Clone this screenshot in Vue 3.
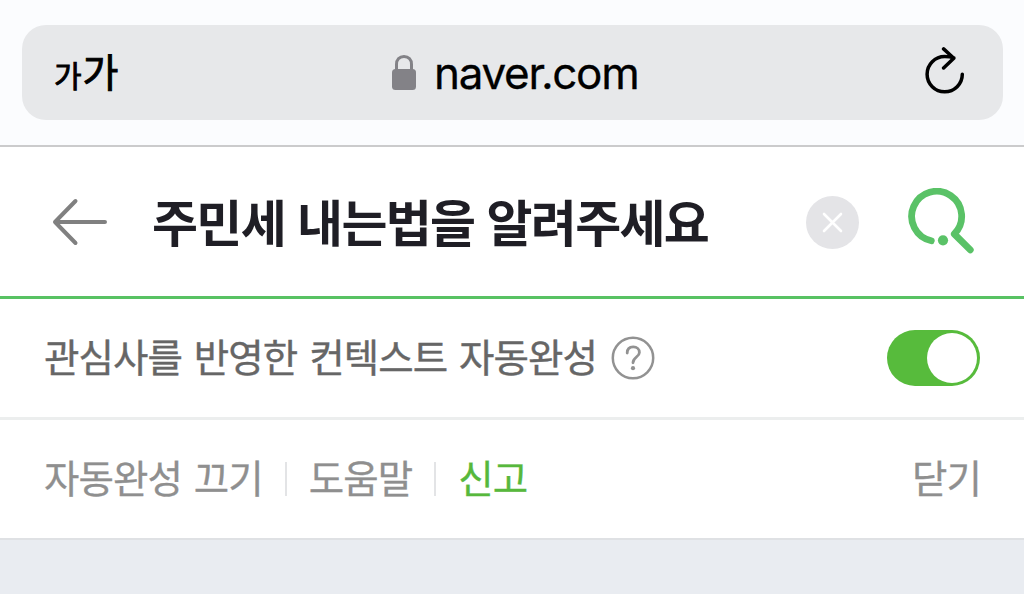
<template>
  <div class="page">
    <header class="browser-bar">
      <div class="address-bar">
        <button class="text-size"><span class="small">가</span><span class="large">가</span></button>
        <div class="site">
          <svg class="lock" viewBox="0 0 24 35" width="24" height="35">
            <path d="M4.5 15V9.5C4.5 4.5 7.5 1.5 12 1.5S19.5 4.5 19.5 9.5V15" fill="none" stroke="#838287" stroke-width="3"/>
            <rect y="14" width="24" height="21" rx="3.5" fill="#838287"/>
          </svg>
          <span class="domain">naver.com</span>
        </div>
        <svg class="reload" viewBox="0 0 40 48" width="40" height="48">
          <path d="M37.3 27.2A17.6 17.6 0 1 1 19.7 9.6C23 9.6 26 9.9 28.8 11M18.6 1.9L28.8 11.2L18.6 21" fill="none" stroke="#000" stroke-width="3.5" stroke-linecap="round" stroke-linejoin="round"/>
        </svg>
      </div>
    </header>

    <div class="search">
      <svg class="back" viewBox="0 0 56 48" width="56" height="48">
        <path d="M23.5 3L3 24L23.5 45M3 24H53" fill="none" stroke="#808080" stroke-width="4" stroke-linecap="round" stroke-linejoin="round"/>
      </svg>
      <span class="query">{{ query }}</span>
      <svg class="clear" viewBox="0 0 53 53" width="53" height="53" @click="query = ''">
        <circle cx="26.5" cy="26.5" r="26.5" fill="#e4e4e7"/>
        <path d="M18 18L35 35M35 18L18 35" stroke="#fff" stroke-width="2.6" stroke-linecap="round"/>
      </svg>
      <svg class="find" viewBox="0 0 68 68" width="68" height="68">
        <path d="M23.3 52.7A25 25 0 1 1 46.3 46L62.3 61.8" fill="none" stroke="#5ac267" stroke-width="6.8" stroke-linecap="round" stroke-linejoin="round"/>
        <circle cx="35" cy="52.3" r="5.1" fill="#5ac267"/>
      </svg>
    </div>

    <div class="context">
      <span class="context-label">관심사를 반영한 컨텍스트 자동완성</span>
      <svg class="help" viewBox="0 0 44 44" width="44" height="44">
        <circle cx="22" cy="22" r="20.2" fill="none" stroke="#929292" stroke-width="2.5"/>
        <path d="M16.2 17C16.2 13 18.5 10.9 22.2 10.9C26 10.9 28.4 13.2 28.4 16.4C28.4 21 22 21.2 22 26.8" fill="none" stroke="#929292" stroke-width="2.8" stroke-linecap="round"/>
        <circle cx="22" cy="32.2" r="2.1" fill="#929292"/>
      </svg>
      <button class="toggle" :class="{ on: enabled }" @click="enabled = !enabled"><span class="knob"></span></button>
    </div>

    <footer class="links">
      <template v-for="(link, index) in links" :key="link.name">
        <span v-if="index > 0" class="divider"></span>
        <span class="link" :class="{ report: link.report }">{{ link.name }}</span>
      </template>
      <span class="link close">닫기</span>
    </footer>
  </div>
</template>

<script setup>
import { ref } from 'vue'

const query = ref('주민세 내는법을 알려주세요')
const enabled = ref(true)

const links = [
  { name: '자동완성 끄기' },
  { name: '도움말' },
  { name: '신고', report: true }
]
</script>

<style>
body {
  margin: 0;
}
</style>

<style scoped>
.page {
  width: 100%;
  height: 594px;
  overflow: hidden;
  background-color: #e9ecf1;
  font-family: "Noto Sans CJK KR", sans-serif;
  white-space: nowrap;
}

.page > * {
  box-sizing: border-box;
  display: flex;
  align-items: center;
  background-color: #fff;
}

button {
  border: 0;
  padding: 0;
  background: none;
  font-family: inherit;
  cursor: pointer;
}

svg {
  flex-shrink: 0;
}

.browser-bar {
  height: 147px;
  padding: 0 21px 1px 22px;
  background-color: #fbfcfe;
  border-bottom: 2px solid #cbcbcc;
}

.address-bar {
  box-sizing: border-box;
  width: 100%;
  height: 95px;
  padding: 0 38px 0 32px;
  border-radius: 24px;
  background-color: #e7e8ea;
  display: flex;
  align-items: center;
}

.text-size {
  width: 70px;
  display: flex;
  align-items: baseline;
  line-height: 50px;
  color: #000;
  -webkit-text-stroke: 0.9px #000;
}

.small {
  font-size: 30px;
  margin-right: 1px;
}

.large {
  font-size: 39px;
}

.site {
  margin-left: 268px;
  display: flex;
  align-items: center;
  gap: 18px;
}

.domain {
  padding-top: 1px;
  font-family: Inter, sans-serif;
  font-size: 44px;
  letter-spacing: -1.3px;
  line-height: 50px;
  -webkit-text-stroke: 0.3px #000;
}

.reload {
  margin-left: auto;
  margin-bottom: 3px;
}

.search {
  height: 152px;
  padding: 1px 48px 0 52px;
  border-bottom: 3px solid #58c263;
}

.query {
  margin-left: 44px;
  padding-bottom: 4px;
  font-size: 50px;
  font-weight: 700;
  letter-spacing: -1.65px;
  word-spacing: 2.3px;
  line-height: 70px;
  color: #1f1e25;
}

.clear {
  margin-left: auto;
  cursor: pointer;
}

.find {
  margin-left: 49px;
}

.context {
  height: 121px;
  padding: 0 44px;
  border-bottom: 3px solid #eceeee;
}

.context-label {
  padding-bottom: 6px;
  font-size: 38.5px;
  letter-spacing: -0.93px;
  word-spacing: 4.2px;
  line-height: 60px;
  color: #666;
  -webkit-text-stroke: 0.4px #666;
}

.help {
  margin-left: 14px;
}

.toggle {
  box-sizing: border-box;
  width: 93px;
  height: 56px;
  margin-left: auto;
  padding: 3px;
  border-radius: 28px;
  background-color: #c8c8c8;
  display: flex;
}

.toggle.on {
  background-color: #57bb3c;
  justify-content: flex-end;
}

.knob {
  width: 50px;
  height: 50px;
  border-radius: 50%;
  background-color: #fff;
}

.links {
  height: 120px;
  padding: 0 43px 0 44px;
  border-bottom: 2px solid #dfe1e4;
}

.link {
  padding-bottom: 6px;
  font-size: 38.5px;
  letter-spacing: -0.93px;
  word-spacing: 4.2px;
  line-height: 60px;
  color: #8f8f8f;
  -webkit-text-stroke: 0.3px currentColor;
}

.report {
  color: #57b83c;
}

.divider {
  width: 2px;
  height: 34px;
  margin: 0 22px;
  background-color: #e3e4e6;
}

.close {
  margin-left: auto;
}
</style>
